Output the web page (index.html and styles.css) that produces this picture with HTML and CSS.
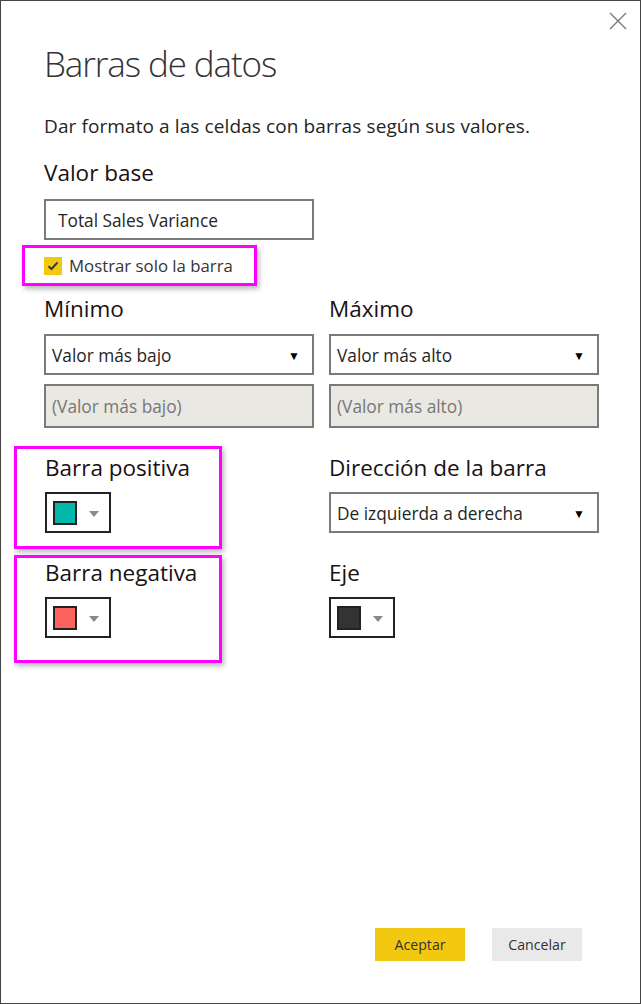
FILE: index.html
```html
<!DOCTYPE html>
<html lang="es">
<head>
<meta charset="utf-8">
<title>Barras de datos</title>
<link rel="stylesheet" href="styles.css">
</head>
<body>
<div class="dialog">
  <button class="close" aria-label="Cerrar">
    <svg width="18" height="18" viewBox="0 0 18 18"><path d="M1 1L17 17M17 1L1 17" stroke="#777" stroke-width="1.3" fill="none"/></svg>
  </button>
  <h1 class="title">Barras de datos</h1>
  <p class="desc">Dar formato a las celdas con barras según sus valores.</p>
  <div class="label first-label">Valor base</div>
  <div class="field base">Total Sales Variance</div>
  <div class="hl hl-check">
    <span class="check"><svg width="12" height="10" viewBox="0 0 12 10"><path d="M1.5 5.2L4.5 8L10.5 1.5" stroke="#3b3b3b" stroke-width="2" fill="none"/></svg></span>
    <span class="check-label">Mostrar solo la barra</span>
  </div>
  <div class="grid row1">
    <div class="col">
      <div class="label">Mínimo</div>
      <div class="field select"><span>Valor más bajo</span><span class="arrow">▼</span></div>
      <div class="field disabled">(Valor más bajo)</div>
    </div>
    <div class="col">
      <div class="label">Máximo</div>
      <div class="field select"><span>Valor más alto</span><span class="arrow">▼</span></div>
      <div class="field disabled">(Valor más alto)</div>
    </div>
  </div>
  <div class="grid row2">
    <div class="col">
      <div class="hl hl-color first">
        <div class="label">Barra positiva</div>
        <div class="picker"><span class="swatch teal"></span><span class="tri"></span></div>
      </div>
    </div>
    <div class="col side">
      <div class="label">Dirección de la barra</div>
      <div class="field select dir"><span>De izquierda a derecha</span><span class="arrow">▼</span></div>
    </div>
  </div>
  <div class="grid row3">
    <div class="col">
      <div class="hl hl-color second">
        <div class="label">Barra negativa</div>
        <div class="picker"><span class="swatch red"></span><span class="tri"></span></div>
      </div>
    </div>
    <div class="col side">
      <div class="label">Eje</div>
      <div class="picker"><span class="swatch dark"></span><span class="tri"></span></div>
    </div>
  </div>
  <div class="actions">
    <button class="btn primary">Aceptar</button>
    <button class="btn secondary">Cancelar</button>
  </div>
</div>
</body>
</html>
```

FILE: styles.css
```css
* { box-sizing: border-box; }
html, body { margin: 0; padding: 0; background: #fff; }
body { font-family: "Open Sans", "Noto Sans", sans-serif; color: #1f1f1f; }

.dialog {
  position: relative;
  width: 641px;
  height: 1004px;
  border: 1px solid #444;
  padding: 0 43px;
  display: flex;
  flex-direction: column;
}

.close {
  position: absolute;
  top: 11px;
  right: 13px;
  width: 18px;
  height: 18px;
  padding: 0;
  border: 0;
  background: none;
}
.close svg { display: block; }

.title {
  margin: 39px 0 0 0;
  font-weight: 300;
  font-size: 35px;
  line-height: 48px;
  color: #333;
  letter-spacing: -1.1px;
}

.desc {
  margin: 25px 0 0 0;
  font-size: 19px;
  line-height: 26px;
  color: #252525;
  letter-spacing: 0.1px;
}

.label {
  font-size: 22.5px;
  line-height: 30px;
  color: #1a1111;
  letter-spacing: 0;
}
.first-label { margin-top: 19px; }

.field {
  height: 41px;
  border: 2px solid #7a7a7a;
  font-size: 17.3px;
  display: flex;
  align-items: center;
  padding: 2px 12px 0 6px;
  color: #252525;
}
.base { width: 270px; margin-top: 11px; padding-left: 12px; }

.hl {
  border: 3px solid #ff00ff;
  box-shadow: 2px 3px 5px rgba(0,0,0,0.28);
}
.hl-check {
  margin: 5px 0 0 -22px;
  width: 235px;
  height: 41px;
  display: flex;
  align-items: center;
  padding-left: 19px;
}
.check {
  width: 18px;
  height: 18px;
  background: #f2c811;
  display: flex;
  align-items: center;
  justify-content: center;
}
.check-label {
  margin-left: 7px;
  font-size: 16.8px;
  color: #333;
}

.grid {
  display: grid;
  grid-template-columns: 270px 270px;
  column-gap: 15px;
}
.row1 { margin-top: 8px; }
.row1 .label + .field { margin-top: 10px; }
.select { justify-content: space-between; }
.arrow { font-size: 12px; color: #000; }
.disabled {
  margin-top: 9px;
  height: 44px;
  padding-top: 0;
  background: #e9e8e2;
  color: #777;
}

.row2 { margin-top: 18px; }
.row2 .side { padding-top: 7px; }
.row3 { margin-top: 6px; }
.row3 .side { padding-top: 3px; }
.side .label + .field,
.side .label + .picker { margin-top: 9px; }

.hl-color {
  margin-left: -30px;
  width: 208px;
  padding-left: 28px;
}
.hl-color.first { height: 103px; padding-top: 4px; }
.hl-color.second { height: 108px; padding-top: 0; }

.picker {
  margin-top: 9px;
  width: 66px;
  height: 41px;
  border: 2px solid #222;
  display: flex;
  align-items: center;
  padding-left: 6px;
}
.swatch {
  width: 24px;
  height: 24px;
  border: 2px solid #222;
}
.teal { background: #01b8aa; }
.red { background: #fd625e; }
.dark { background: #333; }
.tri {
  margin-left: 12px;
  margin-top: 2px;
  width: 0; height: 0;
  border-left: 5.5px solid transparent;
  border-right: 5.5px solid transparent;
  border-top: 6px solid #8a8a8a;
}

.actions {
  margin-top: auto;
  margin-bottom: 42px;
  margin-right: 15px;
  display: flex;
  justify-content: flex-end;
  gap: 27px;
}
.btn {
  height: 33px;
  border: 0;
  font-family: inherit;
  font-size: 14.2px;
  color: #333;
  padding: 0;
}
.primary { width: 90px; background: #f2c811; }
.secondary { width: 90px; background: #e9e9e9; }
```
